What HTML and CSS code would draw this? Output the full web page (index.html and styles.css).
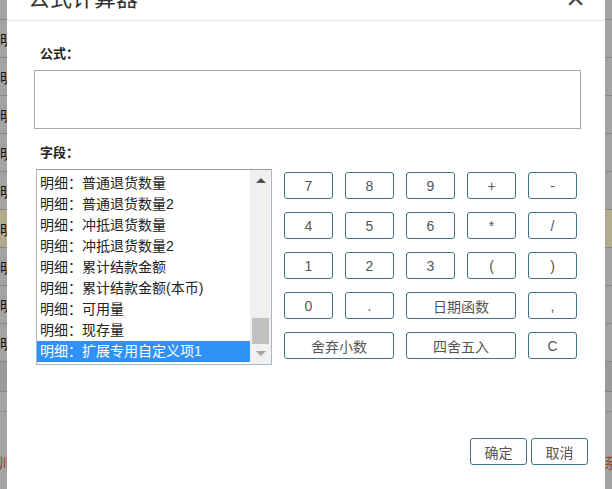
FILE: index.html
```html
<!DOCTYPE html>
<html lang="zh-CN">
<head>
  <meta charset="UTF-8">
  <meta name="viewport" content="width=device-width, initial-scale=1.0">
  <title>公式计算器</title>
  <link rel="stylesheet" href="styles.css">
</head>
<body>
  <div class="page">
    <div class="side side-left">
      <div class="row row-top"></div>
      <div class="row"><span>明</span></div>
      <div class="row"><span>明</span></div>
      <div class="row"><span>明</span></div>
      <div class="row"><span>明</span></div>
      <div class="row"><span>明</span></div>
      <div class="row row-hl"><span>明</span></div>
      <div class="row"><span>明</span></div>
      <div class="row"><span>明</span></div>
      <div class="row"><span>明</span></div>
      <div class="row row-short"></div>
      <div class="row-rest"><span class="foot-text">训</span></div>
    </div>

    <div class="dialog">
      <div class="dialog-header">
        <h3 class="dialog-title">公式计算器</h3>
        <span class="dialog-close">×</span>
      </div>
      <div class="dialog-body">
        <div class="label">公式：</div>
        <textarea class="formula"></textarea>
        <div class="label label-fields">字段：</div>
        <div class="fields-row">
          <div class="field-list">
            <div class="field-items">
              <div class="field-item">明细：普通退货数量</div>
              <div class="field-item">明细：普通退货数量2</div>
              <div class="field-item">明细：冲抵退货数量</div>
              <div class="field-item">明细：冲抵退货数量2</div>
              <div class="field-item">明细：累计结款金额</div>
              <div class="field-item">明细：累计结款金额(本币)</div>
              <div class="field-item">明细：可用量</div>
              <div class="field-item">明细：现存量</div>
              <div class="field-item selected">明细：扩展专用自定义项1</div>
            </div>
            <div class="scrollbar">
              <span class="arrow arrow-up"></span>
              <span class="track"><span class="thumb"></span></span>
              <span class="arrow arrow-down"></span>
            </div>
          </div>
          <div class="keypad">
            <button class="key">7</button>
            <button class="key">8</button>
            <button class="key">9</button>
            <button class="key">+</button>
            <button class="key">-</button>
            <button class="key">4</button>
            <button class="key">5</button>
            <button class="key">6</button>
            <button class="key">*</button>
            <button class="key">/</button>
            <button class="key">1</button>
            <button class="key">2</button>
            <button class="key">3</button>
            <button class="key">(</button>
            <button class="key">)</button>
            <button class="key">0</button>
            <button class="key">.</button>
            <button class="key span2">日期函数</button>
            <button class="key">,</button>
            <button class="key span2">舍弃小数</button>
            <button class="key span2">四舍五入</button>
            <button class="key">C</button>
          </div>
        </div>
      </div>
      <div class="dialog-footer">
        <button class="btn">确定</button>
        <button class="btn">取消</button>
      </div>
    </div>

    <div class="side side-right">
      <div class="row row-top"></div>
      <div class="row"></div>
      <div class="row"></div>
      <div class="row"></div>
      <div class="row"></div>
      <div class="row"></div>
      <div class="row row-hl"></div>
      <div class="row"></div>
      <div class="row"></div>
      <div class="row"></div>
      <div class="row row-short"></div>
      <div class="row-rest"><span class="foot-text">系</span></div>
    </div>
  </div>
</body>
</html>
```

FILE: styles.css
```css
body {
  margin: 0;
  font-family: "Liberation Sans", "Noto Sans CJK SC", sans-serif;
  background-color: #9d9d9d;
}

.page {
  display: flex;
  height: 489px;
  overflow: hidden;
}

/* masked table behind the dialog */
.side {
  width: 7px;
  display: flex;
  flex-direction: column;
  overflow: hidden;
  background-color: #a3a3a3;
}

.row {
  height: 37px;
  border-bottom: 1px solid #858585;
  display: flex;
  align-items: center;
  justify-content: flex-end;
  font-size: 14px;
  color: #111;
  overflow: hidden;
  white-space: nowrap;
}

.side-left .row span {
  margin-right: -7px;
}

.row-top {
  height: 19px;
}

.row-hl {
  background-color: #b2ab8c;
}

.row-short {
  height: 29px;
  background-color: #9a9a9a;
}

.row-rest {
  flex: 1;
  position: relative;
  border-top: 1px solid #8c8c8c;
  margin-top: 19px;
}

.foot-text {
  position: absolute;
  top: 40px;
  font-size: 14px;
  color: #8a4a2a;
}

.side-left .foot-text {
  right: -2px;
}

.side-right .foot-text {
  left: -1px;
}

/* dialog */
.dialog {
  width: 598px;
  background-color: #fff;
  display: flex;
  flex-direction: column;
  overflow: hidden;
}

.dialog-header {
  height: 20px;
  border-bottom: 1px solid #e5e5e5;
  display: flex;
  justify-content: space-between;
  padding: 0 20px 0 21px;
}

.dialog-title {
  margin: -12px 0 0;
  font-size: 22px;
  line-height: 22px;
  font-weight: normal;
  color: #333;
}

.dialog-close {
  margin-top: -13px;
  font-size: 32px;
  line-height: 22px;
  color: #444;
}

.dialog-body {
  padding: 0 24px 0 27px;
}

.label {
  margin: 24px 0 0 6px;
  font-size: 13px;
  font-weight: bold;
  line-height: 18px;
  color: #222;
}

.formula {
  display: block;
  box-sizing: border-box;
  width: 547px;
  height: 59px;
  margin: 7px 0 0;
  border: 1px solid #a9a9a9;
  resize: none;
}

.label-fields {
  margin-top: 15px;
}

.fields-row {
  display: flex;
  margin-top: 7px;
  gap: 12px;
}

.field-list {
  box-sizing: border-box;
  width: 236px;
  height: 196px;
  margin-left: 2px;
  border: 1px solid #a9b6c4;
  border-top-color: #9a9a9a;
  display: flex;
}

.field-items {
  flex: 1;
  padding-top: 3px;
  overflow: hidden;
}

.field-item {
  height: 21px;
  line-height: 21px;
  padding-left: 3px;
  font-size: 14px;
  color: #222;
  white-space: nowrap;
}

.field-item.selected {
  background-color: #3192f5;
  color: #fff;
}

.scrollbar {
  width: 21px;
  background-color: #f0f0f0;
  display: flex;
  flex-direction: column;
  align-items: center;
}

.arrow {
  width: 0;
  height: 0;
  border-left: 5px solid transparent;
  border-right: 5px solid transparent;
}

.arrow-up {
  margin-top: 8px;
  border-bottom: 5px solid #505050;
}

.arrow-down {
  margin-bottom: 8px;
  border-top: 5px solid #a3a3a3;
}

.track {
  flex: 1;
  width: 100%;
  display: flex;
  flex-direction: column;
  justify-content: flex-end;
  padding: 0 2px 7px;
  box-sizing: border-box;
}

.thumb {
  height: 26px;
  background-color: #c1c1c1;
}

.keypad {
  display: grid;
  grid-template-columns: repeat(5, 49px);
  grid-auto-rows: 27px;
  column-gap: 12px;
  row-gap: 13px;
  margin-top: 3px;
}

.key,
.btn {
  font-family: "Liberation Sans", "Noto Sans CJK SC", sans-serif;
  font-size: 14px;
  color: #555;
  background-color: #fff;
  border: 1px solid #3f7482;
  border-radius: 3px;
  padding: 0;
  cursor: pointer;
}

.key.span2 {
  grid-column: span 2;
}

.dialog-footer {
  display: flex;
  justify-content: flex-end;
  gap: 4px;
  margin-top: 73px;
  padding-right: 17px;
}

.btn {
  width: 57px;
  height: 27px;
}
```
